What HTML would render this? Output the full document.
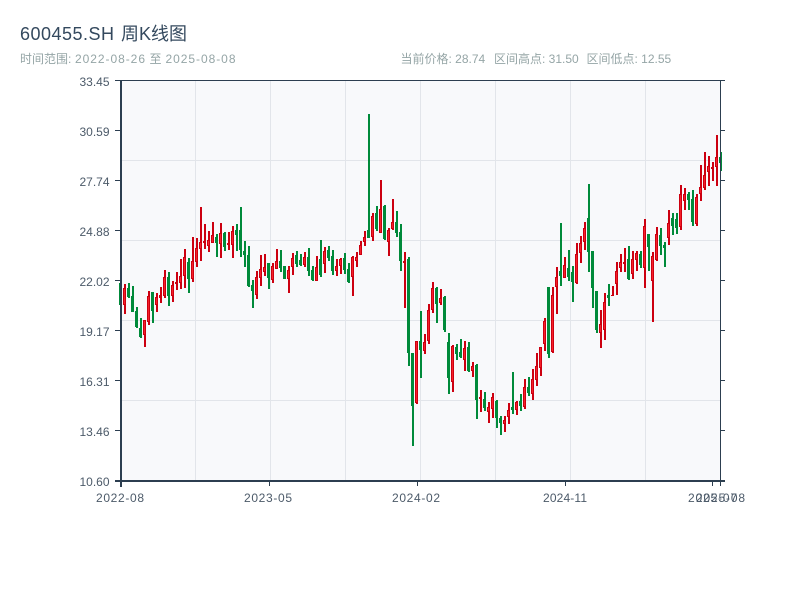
<!DOCTYPE html>
<html lang="zh">
<head>
<meta charset="utf-8">
<title>600455.SH 周K线图</title>
<style>
html,body{margin:0;padding:0;background:#fff;width:800px;height:600px;overflow:hidden}
svg{display:block}
text{font-family:"Liberation Sans","Noto Sans CJK SC",sans-serif}
</style>
</head>
<body>
<svg width="800" height="600" viewBox="0 0 800 600" xmlns="http://www.w3.org/2000/svg">
<rect width="800" height="600" fill="#fff"/>
<g font-size="18" fill="#34495e">
<text x="20" y="40" textLength="94" lengthAdjust="spacing">600455.SH</text>
<text x="121" y="40">周K线图</text>
</g>
<g font-size="12" fill="#95a5a6">
<text x="20" y="63">时间范围:</text>
<text x="75" y="63" textLength="70" lengthAdjust="spacing">2022-08-26</text>
<text x="149.5" y="63">至</text>
<text x="165.5" y="63" textLength="70" lengthAdjust="spacing">2025-08-08</text>
<text x="400.5" y="63">当前价格: 28.74</text>
<text x="494" y="63">区间高点: 31.50</text>
<text x="586.5" y="63">区间低点: 12.55</text>
</g>

<rect x="121" y="81" width="600" height="400" fill="#f8f9fb"/>
<path shape-rendering="crispEdges" d="M195.5 81V480M270.5 81V480M345.5 81V480M420.5 81V480M495.5 81V480M570.5 81V480M645.5 81V480M121 160.5H720M121 240.5H720M121 320.5H720M121 400.5H720" stroke="#e2e5ea" stroke-width="1" fill="none"/>

<g fill="none" shape-rendering="crispEdges">
<path stroke="#008a3a" stroke-width="2" d="M121 283V305M129 283V298M133 286V312M137 307V328M141 318V338M153 292V323M169 272V306M189 258V293M217 234V257M225 232V251M237 224V251M241 207V257M245 241V267M249 246V287M253 280V308M269 263V289M281 250V272M285 266V279M297 251V267M301 254V266M309 248V276M313 266V281M321 240V277M329 246V261M333 250V275M345 253V274M349 263V283M369 114V238M377 206V231M385 205V240M397 211V237M401 224V271M409 257V366M413 353V446M421 311V378M437 287V323M445 296V332M449 333V394M457 344V360M461 339V358M469 342V372M477 364V419M485 392V411M497 400V428M501 416V435M513 372V414M521 394V411M529 377V396M549 287V358M561 223V286M569 250V281M573 266V302M589 184V272M593 251V308M597 291V333M609 284V306M629 246V280M641 251V268M649 234V271M661 228V255M665 242V267M673 213V235M677 213V234M689 192V210M693 190V226M721 152V171"/>
<path stroke="#008a3a" stroke-width="3" d="M120.5 283V305M128.5 288V297M132.5 296V312M136.5 311V327M140.5 328V337M152.5 292V311M168.5 277V296M188.5 262V279M216.5 237V243M224.5 233V247M236.5 230V235M240.5 230V250M244.5 251V255M248.5 255V286M252.5 285V291M268.5 263V278M280.5 261V268M284.5 266V279M296.5 255V264M300.5 260V265M308.5 257V271M312.5 270V280M320.5 259V275M328.5 250V258M332.5 256V271M344.5 258V270M348.5 269V282M368.5 230V238M376.5 213V229M384.5 206V239M396.5 222V233M400.5 232V261M408.5 259V353M412.5 353V406M420.5 341V350M436.5 288V304M444.5 297V330M448.5 342V378M456.5 347V354M460.5 352V357M468.5 347V371M476.5 365V400M484.5 399V408M496.5 401V418M500.5 418V423M512.5 407V410M520.5 401V406M528.5 387V393M548.5 287V354M560.5 271V276M568.5 268V277M572.5 272V282M588.5 218V252M592.5 251V288M596.5 291V330M608.5 295V298M628.5 259V279M640.5 254V265M648.5 234V247M660.5 235V246M664.5 245V248M672.5 218V226M676.5 219V228M688.5 194V200M692.5 199V222M720.5 157V163"/>
<path stroke="#cc0010" stroke-width="2" d="M125 284V314M145 320V347M149 291V325M157 293V312M161 287V303M165 270V298M173 281V302M177 272V290M181 259V289M185 249V288M193 237V282M197 238V267M201 207V261M205 224V249M209 231V252M213 222V243M221 223V258M229 232V250M233 226V258M257 271V299M261 255V286M265 254V276M273 263V283M277 249V269M289 266V293M293 253V275M305 252V267M317 256V281M325 247V273M337 259V276M341 258V274M353 256V296M357 252V267M361 241V255M365 231V246M373 213V241M381 180V233M389 228V256M393 199V230M405 252V308M417 341V404M425 334V354M429 304V344M433 282V313M441 289V305M453 345V392M465 341V371M473 362V377M481 390V412M489 402V423M493 393V418M505 416V432M509 403V424M517 401V415M525 379V409M533 369V400M537 353V386M541 347V376M545 318V351M553 287V353M557 267V314M565 257V278M577 243V284M581 236V263M585 222V250M601 310V348M605 293V340M613 286V296M617 262V295M621 254V272M625 248V272M633 251V279M637 251V271M645 219V288M653 252V322M657 227V261M669 210V245M681 185V230M685 188V210M697 194V226M701 165V201M705 152V190M709 156V186M713 162V181M717 135V186"/>
<path stroke="#cc0010" stroke-width="3" d="M124.5 288V305M144.5 320V335M148.5 296V322M156.5 297V305M160.5 295V298M164.5 277V296M172.5 285V296M176.5 282V284M180.5 276V283M184.5 257V276M192.5 261V279M196.5 248V262M200.5 242V249M204.5 241V243M208.5 240V246M212.5 235V243M220.5 233V244M228.5 243V245M232.5 231V245M256.5 277V295M260.5 269V278M264.5 267V272M272.5 266V280M276.5 261V269M288.5 270V279M292.5 258V267M304.5 257V265M316.5 267V281M324.5 251V264M336.5 266V271M340.5 259V266M352.5 257V277M356.5 257V261M360.5 245V255M364.5 237V242M372.5 216V237M380.5 209V233M388.5 230V242M392.5 222V229M404.5 261V263M416.5 341V403M424.5 342V351M428.5 310V341M432.5 288V310M440.5 298V303M452.5 346V382M464.5 348V360M472.5 366V371M480.5 397V399M488.5 407V412M492.5 397V409M504.5 420V424M508.5 410V417M516.5 402V410M524.5 387V407M532.5 379V394M536.5 366V380M540.5 347V368M544.5 321V344M552.5 295V352M556.5 277V287M564.5 265V278M576.5 254V283M580.5 243V253M584.5 228V242M600.5 324V333M604.5 302V330M612.5 295V296M616.5 271V284M620.5 262V268M624.5 262V264M632.5 259V274M636.5 253V260M644.5 226V268M652.5 256V281M656.5 234V260M668.5 223V238M680.5 194V227M684.5 194V201M696.5 197V224M700.5 187V194M704.5 175V188M708.5 166V172M712.5 167V169M716.5 157V167"/>
<path stroke="#f5202a" stroke-width="1" d="M124.5 289V304M144.5 321V334M148.5 297V321M156.5 298V304M164.5 278V295M172.5 286V295M180.5 277V282M184.5 258V275M192.5 262V278M196.5 249V261M200.5 243V248M208.5 241V245M212.5 236V242M220.5 234V243M232.5 232V244M256.5 278V294M260.5 270V277M264.5 268V271M272.5 267V279M276.5 262V268M288.5 271V278M292.5 259V266M304.5 258V264M316.5 268V280M324.5 252V263M336.5 267V270M340.5 260V265M352.5 258V276M356.5 258V260M360.5 246V254M364.5 238V241M372.5 217V236M380.5 210V232M388.5 231V241M392.5 223V228M416.5 342V402M424.5 343V350M428.5 311V340M432.5 289V309M440.5 299V302M452.5 347V381M464.5 349V359M472.5 367V370M488.5 408V411M492.5 398V408M504.5 421V423M508.5 411V416M516.5 403V409M524.5 388V406M532.5 380V393M536.5 367V379M540.5 348V367M544.5 322V343M552.5 296V351M556.5 278V286M564.5 266V277M576.5 255V282M580.5 244V252M584.5 229V241M600.5 325V332M604.5 303V329M616.5 272V283M620.5 263V267M632.5 260V273M636.5 254V259M644.5 227V267M652.5 257V280M656.5 235V259M668.5 224V237M680.5 195V226M684.5 195V200M696.5 198V223M700.5 188V193M704.5 176V187M708.5 167V171M716.5 158V166"/>
</g>

<g fill="none" stroke="#2c3e50" shape-rendering="crispEdges">
<path stroke-width="1" d="M115 80.5H725M720.5 80V486"/>
<path stroke-width="2" d="M121 80V487M115 481H725"/>
<path stroke-width="1" d="M115 130.5H120M115 180.5H120M115 230.5H120M115 280.5H120M115 330.5H120M115 380.5H120M115 430.5H120M720 130.5H725M720 180.5H725M720 230.5H725M720 280.5H725M720 330.5H725M720 380.5H725M720 430.5H725M269.5 482V486M417.5 482V486M565.5 482V486M712.5 482V486"/>
</g>

<g font-size="12" fill="#4c5a69" text-anchor="end">
<text x="109.5" y="86">33.45</text>
<text x="109.5" y="136">30.59</text>
<text x="109.5" y="186">27.74</text>
<text x="109.5" y="236">24.88</text>
<text x="109.5" y="286">22.02</text>
<text x="109.5" y="336">19.17</text>
<text x="109.5" y="386">16.31</text>
<text x="109.5" y="436">13.46</text>
<text x="109.5" y="486">10.60</text>
</g>
<g font-size="12" fill="#4c5a69">
<text x="96" y="502" textLength="48" lengthAdjust="spacing">2022-08</text>
<text x="244" y="502" textLength="48" lengthAdjust="spacing">2023-05</text>
<text x="392" y="502" textLength="48" lengthAdjust="spacing">2024-02</text>
<text x="543" y="502" textLength="44" lengthAdjust="spacing">2024-11</text>
<text x="688" y="502" textLength="49" lengthAdjust="spacing">2025-07</text>
<text x="696" y="502" textLength="49" lengthAdjust="spacing">2025-08</text>
</g>
</svg>
</body>
</html>
